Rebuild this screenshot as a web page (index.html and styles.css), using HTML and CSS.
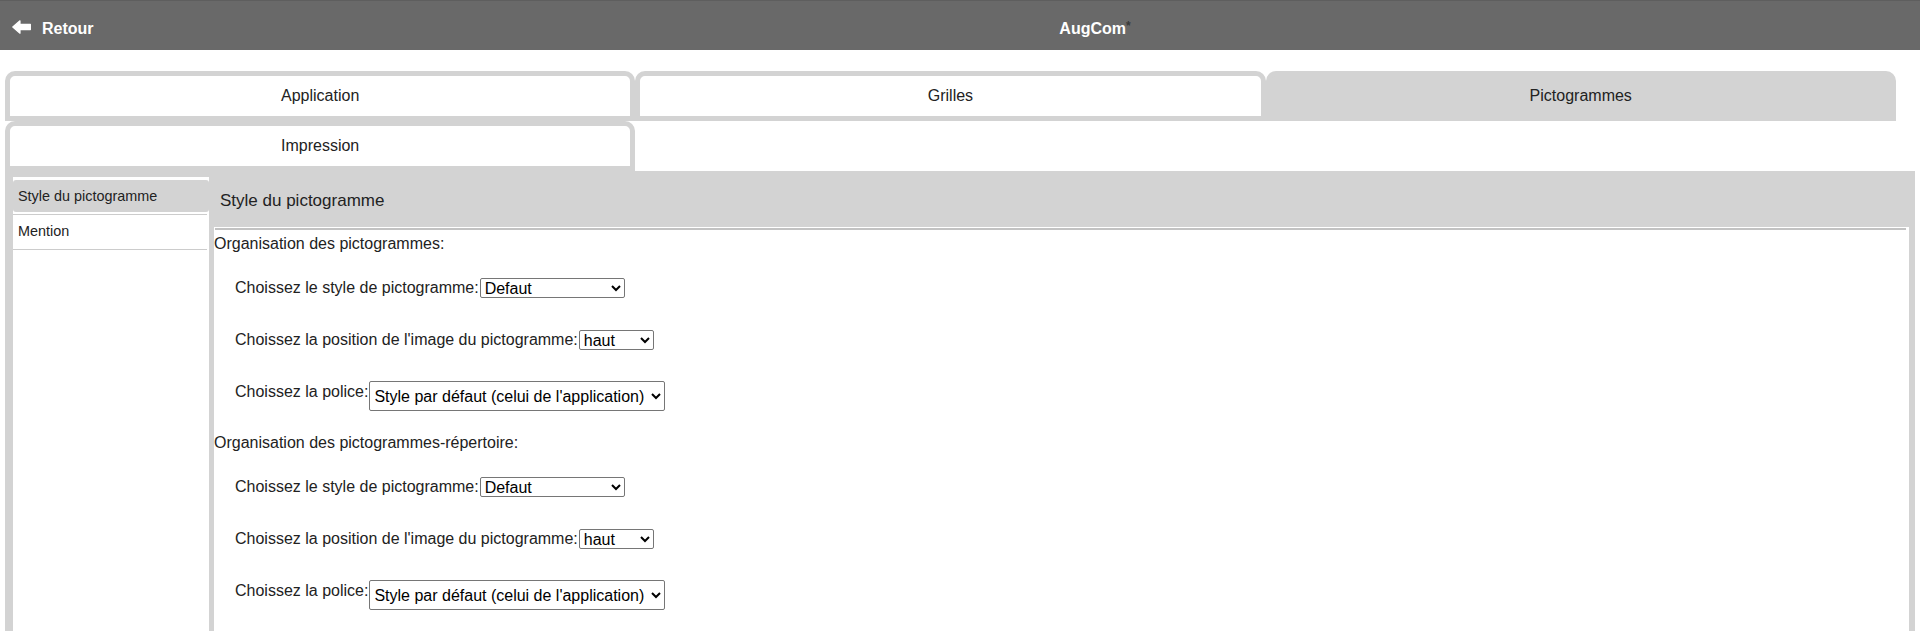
FILE: index.html
```html
<!DOCTYPE html>
<html lang="fr">
<head>
<meta charset="utf-8">
<title>AugCom - Paramètres</title>
<link rel="stylesheet" href="styles.css">
</head>
<body>
<header class="topbar">
  <div class="back">
    <svg class="back-icon" width="19" height="14" viewBox="0 0 19 14" aria-hidden="true">
      <path d="M0.8 7 L8 0.8 L8 4.4 L18.4 4.4 L18.4 9.6 L8 9.6 L8 13.2 Z" fill="#fff" stroke="#fff" stroke-width="1.2" stroke-linejoin="round"/>
    </svg>
    <span class="back-label">Retour</span>
  </div>
  <div class="title">AugCom<span class="star">*</span></div>
</header>

<nav class="tabs">
  <div class="tab">Application</div>
  <div class="tab">Grilles</div>
  <div class="tab tab-active">Pictogrammes</div>
  <div class="tab">Impression</div>
</nav>

<section class="workspace">
  <aside class="sidebar">
    <div class="side-item side-item-active"><div class="side-inner">Style du pictogramme</div></div>
    <div class="side-item"><div class="side-inner">Mention</div></div>
  </aside>
  <main class="main">
    <div class="main-title">Style du pictogramme</div>
    <div class="panel">
      <div class="rule"></div>

      <div class="group-title">Organisation des pictogrammes:</div>
      <div class="row row-first">
        <span class="label">Choissez le style de pictogramme:</span>
        <select class="sel sel-style"><option>Defaut</option></select>
      </div>
      <div class="row row-gap">
        <span class="label">Choissez la position de l'image du pictogramme:</span>
        <select class="sel sel-pos"><option>haut</option></select>
      </div>
      <div class="row row-font">
        <span class="label">Choissez la police:</span>
        <select class="sel sel-font"><option>Style par défaut (celui de l'application)</option></select>
      </div>

      <div class="group-title group-title-next">Organisation des pictogrammes-répertoire:</div>
      <div class="row row-first">
        <span class="label">Choissez le style de pictogramme:</span>
        <select class="sel sel-style"><option>Defaut</option></select>
      </div>
      <div class="row row-gap">
        <span class="label">Choissez la position de l'image du pictogramme:</span>
        <select class="sel sel-pos"><option>haut</option></select>
      </div>
      <div class="row row-font">
        <span class="label">Choissez la police:</span>
        <select class="sel sel-font"><option>Style par défaut (celui de l'application)</option></select>
      </div>
    </div>
  </main>
</section>
</body>
</html>
```

FILE: styles.css
```css
html, body {
  margin: 0;
  padding: 0;
  overflow: hidden;
  background: #fff;
}

body {
  font-family: "Liberation Sans", Arial, sans-serif;
  font-size: 16px;
  color: #222;
}

.topbar {
  height: 50px;
  box-sizing: border-box;
  padding-top: 6px;
  background: #696969;
  border-top: 1px solid #5e5e5e;
  display: grid;
  grid-template-columns: 270px 1fr;
  align-items: center;
  color: #fff;
  font-weight: bold;
}

.back {
  display: flex;
  align-items: center;
  padding-left: 12px;
  gap: 11px;
}

.back-icon {
  display: block;
  margin-top: -3px;
}

.title {
  text-align: center;
}

.star {
  color: #3a3a3a;
  font-weight: bold;
  font-size: 12px;
  vertical-align: 4px;
}

.tabs {
  display: flex;
  flex-wrap: wrap;
  margin: 21px 5px 0;
}

.tab {
  width: 33%;
  height: 50px;
  box-sizing: border-box;
  border: 5px solid #d3d3d3;
  border-radius: 10px 10px 0 0;
  background: #fff;
  display: flex;
  align-items: center;
  justify-content: center;
  color: #222;
}

.tab-active {
  background: #d3d3d3;
}

.workspace {
  margin: 0 5px;
  height: 460px;
  box-sizing: border-box;
  padding: 6px 6px 0 8px;
  background: #d3d3d3;
  display: flex;
  overflow: hidden;
}

.sidebar {
  width: 196px;
  flex: none;
  background: #fff;
  font-size: 14.4px;
  padding-top: 3px;
}

.side-item {
  margin-right: 2px;
  padding-bottom: 2px;
  border-bottom: 1px solid #cccccc;
}

.side-inner {
  padding: 8px 5px;
  line-height: 16px;
  border-radius: 3px;
}

.side-item-active .side-inner {
  background: #d3d3d3;
  margin-right: -2px;
}

.main {
  flex: 1;
  margin-left: 5px;
  display: flex;
  flex-direction: column;
}

.main-title {
  height: 50px;
  box-sizing: border-box;
  padding: 14px 0 0 6px;
  font-size: 17px;
  line-height: 20px;
}

.panel {
  flex: 1;
  background: #fff;
}

.rule {
  height: 2px;
  margin: 1px 3px 0 1px;
  background: #c2c2c2;
}

.group-title {
  margin-top: 5px;
  line-height: 18px;
}

.group-title-next {
  margin-top: 23px;
}

.row {
  display: flex;
  align-items: center;
  gap: 1px;
  padding-left: 21px;
  margin-top: 24px;
  line-height: 20px;
}

.row-first {
  margin-top: 25px;
}

.row-gap {
  margin-top: 32px;
}

.row-font {
  margin-top: 31px;
  align-items: flex-start;
}

.row-font .label {
  padding-top: 1px;
}

.sel {
  box-sizing: border-box;
  height: 20px;
  font-family: "Liberation Sans", Arial, sans-serif;
  font-size: 16px;
  color: #000;
  background: #fff;
  border: 1px solid #767676;
  border-radius: 2px;
  margin: 0;
}

.sel-style {
  width: 145px;
}

.sel-pos {
  width: 75px;
}

.sel-font {
  width: 296px;
  height: 30px;
}
```
